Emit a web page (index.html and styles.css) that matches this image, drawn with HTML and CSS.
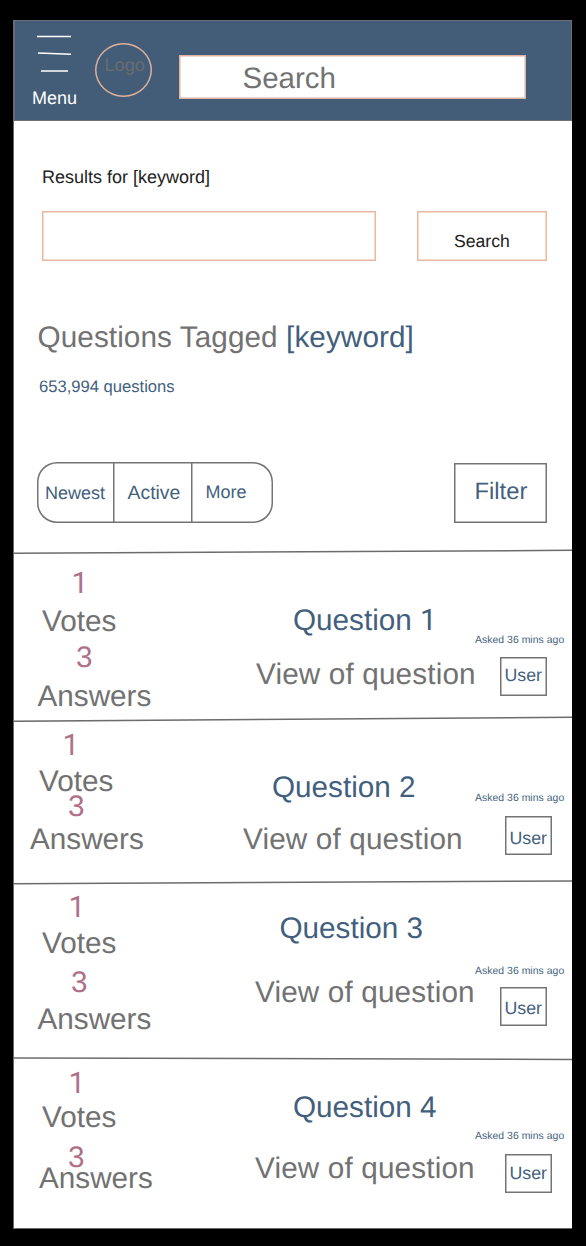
FILE: index.html
```html
<!DOCTYPE html>
<html lang="en">
<head>
<meta charset="utf-8">
<title>Questions Tagged [keyword]</title>
<link rel="stylesheet" href="styles.css">
</head>
<body>
<div class="screen">
  <header class="topbar">
    <div class="menu">
      <svg class="menu-icon" viewBox="0 0 40 40" width="40" height="40"><path d="M1 1.5H35M2 18L35 19.3M5 36H32" fill="none" stroke="#fff" stroke-width="1.5"/></svg>
      <span class="menu-label">Menu</span>
    </div>
    <div class="logo">Logo</div>
    <div class="top-search">Search</div>
  </header>

  <p class="results">Results for [keyword]</p>
  <div class="search-row">
    <div class="field"></div>
    <div class="search-button">Search</div>
  </div>

  <h1 class="title">Questions Tagged <span class="keyword">[keyword]</span></h1>
  <p class="count">653,994 questions</p>

  <div class="toolbar">
    <div class="tabs">
      <span class="tab newest">Newest</span>
      <span class="tab active">Active</span>
      <span class="tab more">More</span>
    </div>
    <div class="filter">Filter</div>
  </div>

  <main class="list">
    <article class="question q1">
      <svg class="divider" viewBox="0 0 558 6"><path d="M0 4.3L558 1.3"/></svg>
      <div class="body">
        <div class="stats">
          <span class="votes num one">1</span><span class="votes-label">Votes</span>
          <span class="answers num">3</span><span class="answers-label">Answers</span>
        </div>
        <div class="content"><h2 class="name">Question <span class="one">1</span></h2><p class="excerpt">View of question</p></div>
        <div class="meta"><span class="asked">Asked 36 mins ago</span><span class="user">User</span></div>
      </div>
    </article>
    <article class="question q2">
      <svg class="divider" viewBox="0 0 558 6"><path d="M0 5.3L558 1.2"/></svg>
      <div class="body">
        <div class="stats">
          <span class="votes num one">1</span><span class="votes-label">Votes</span>
          <span class="answers num">3</span><span class="answers-label">Answers</span>
        </div>
        <div class="content"><h2 class="name">Question 2</h2><p class="excerpt">View of question</p></div>
        <div class="meta"><span class="asked">Asked 36 mins ago</span><span class="user">User</span></div>
      </div>
    </article>
    <article class="question q3">
      <svg class="divider" viewBox="0 0 558 6"><path d="M0 3.8L558 0.9"/></svg>
      <div class="body">
        <div class="stats">
          <span class="votes num one">1</span><span class="votes-label">Votes</span>
          <span class="answers num">3</span><span class="answers-label">Answers</span>
        </div>
        <div class="content"><h2 class="name">Question 3</h2><p class="excerpt">View of question</p></div>
        <div class="meta"><span class="asked">Asked 36 mins ago</span><span class="user">User</span></div>
      </div>
    </article>
    <article class="question q4">
      <svg class="divider" viewBox="0 0 558 6"><path d="M0 1.9L558 3.4"/></svg>
      <div class="body">
        <div class="stats">
          <span class="votes num one">1</span><span class="votes-label">Votes</span>
          <span class="answers num">3</span><span class="answers-label">Answers</span>
        </div>
        <div class="content"><h2 class="name">Question 4</h2><p class="excerpt">View of question</p></div>
        <div class="meta"><span class="asked">Asked 36 mins ago</span><span class="user">User</span></div>
      </div>
    </article>
  </main>
</div>
</body>
</html>
```
FILE: styles.css
```css
* { box-sizing: border-box; }
body {
  margin: 0;
  padding: 20px 14px 18px;
  background: #000;
  font-family: "Liberation Sans", Arial, sans-serif;
  font-size: 18px;
  line-height: 20px;
  color: #727272;
  text-rendering: geometricPrecision;
  white-space: nowrap;
}
p, h1, h2 { margin: 0; font-weight: normal; font-size: inherit; }
.screen {
  display: flex;
  flex-direction: column;
  width: 558px;
  height: 1208px;
  background: #fff;
  box-shadow: -0.5px 0.5px 0 0.5px #6a6a6a;
}

.topbar {
  display: flex;
  align-items: flex-start;
  height: 101px;
  background: #435c77;
  border: 1px solid #6e7073;
}
.menu { display: flex; flex-direction: column; width: 45px; margin: 14px 0 0 17px; color: #fff; }
.menu-icon { margin-left: 4px; }
.menu-label { margin-top: 13px; }
.logo {
  width: 57px;
  height: 54px;
  margin: 22px 0 0 18px;
  padding: 12px 0 0 9.5px;
  border-radius: 50%;
  box-shadow: inset 0 0 0 1.5px #dfb09b;
  font-size: 18.2px;
  color: #6a6c70;
}
.top-search {
  width: 347px;
  height: 44px;
  margin: 34px 0 0 27px;
  padding: 13px 0 0 63.5px;
  background: #fff;
  box-shadow: inset 0 0 0 1.5px #e0b29f;
  font-size: 29.5px;
  line-height: 22px;
}

.results { margin: 46px 0 0 28px; color: #222; }
.search-row { display: flex; gap: 41px; margin: 24px 0 0 28px; }
.field, .search-button { height: 50px; box-shadow: inset 0 0 0 1.5px #e9b89e; }
.field { width: 334px; }
.search-button { width: 130px; padding: 20px 0 0 37px; font-size: 17.6px; color: #222; }

.title { margin: 66px 0 0 23.5px; font-size: 29.7px; line-height: 22px; letter-spacing: 0.09px; }
.keyword, .name { color: #435f7e; }
.count { margin: 28px 0 0 25px; font-size: 16.6px; color: #435f7e; }

.toolbar { display: flex; align-items: flex-start; height: 61px; margin: 65px 0 0 23px; color: #435f7e; }
.tabs { display: flex; width: 236px; height: 61px; border-radius: 20px; box-shadow: inset 0 0 0 1.5px #747474; }
.tab { padding-top: 21px; }
.newest { width: 76px; padding-left: 8px; }
.active { width: 78px; padding-left: 14.5px; font-size: 19.4px; box-shadow: inset 1.5px 0 0 #747474; }
.more {
  width: 82px;
  padding: 20px 0 0 14.5px;
  background: linear-gradient(#747474, #747474) 0 0 / 1.5px 61px no-repeat;
}
.filter {
  width: 93px;
  height: 60px;
  margin: 1px 0 0 181px;
  padding: 18px 0 0 20.5px;
  box-shadow: inset 0 0 0 1.5px #747474;
  font-size: 23.8px;
  line-height: 22px;
}

.list { display: flex; flex-direction: column; margin-top: 26px; }
.question { font-size: 29.7px; line-height: 22px; }
.q1 { height: 167px; }
.q2 { height: 164px; }
.q3 { height: 176px; }
.q4 { height: 172px; }
.divider { display: block; width: 558px; height: 6px; }
.divider path { fill: none; stroke: #6c6c6c; stroke-width: 1.5; }
.body { display: flex; }
.stats, .content, .meta { display: flex; flex-direction: column; align-items: flex-start; padding-top: 1px; }
.stats { width: 216px; }
.content { width: 244px; }
.excerpt { letter-spacing: 0.15px; }
.num { color: #b07088; }
.one { font-family: Roboto, "Liberation Sans", sans-serif; }
.asked { margin-left: 1px; font-size: 10.4px; line-height: 12px; letter-spacing: 0.05px; color: #435f7e; }
.user {
  width: 47px;
  height: 39px;
  padding-left: 4.5px;
  font-size: 17.8px;
  line-height: 36px;
  color: #435f7e;
  box-shadow: inset 0 0 0 1.5px #747474;
}

.q1 .votes { margin: 17px 0 0 57.5px; }
.q1 .votes-label { margin: 16px 0 0 28px; }
.q1 .answers { margin: 14px 0 0 62px; }
.q1 .answers-label { margin: 17px 0 0 23.5px; }
.q1 .name { margin: 54px 0 0 63px; }
.q1 .excerpt { margin: 32px 0 0 26px; }
.q1 .asked { margin-top: 79px; }
.q1 .user { margin: 10px 0 0 26px; }

.q2 .votes { margin: 12px 0 0 48.5px; }
.q2 .votes-label { margin: 14px 0 0 25px; }
.q2 .answers { margin: 3px 0 0 54px; }
.q2 .answers-label { margin: 11px 0 0 16px; }
.q2 .name { margin: 54px 0 0 42px; }
.q2 .excerpt { margin: 30px 0 0 13px; }
.q2 .asked { margin-top: 70px; }
.q2 .user { margin: 11px 0 0 31px; line-height: 45px; }

.q3 .votes { margin: 10px 0 0 54.5px; }
.q3 .votes-label { margin: 14px 0 0 28px; }
.q3 .answers { margin: 17px 0 0 57px; }
.q3 .answers-label { margin: 15px 0 0 23.5px; }
.q3 .name { margin: 31px 0 0 49.5px; }
.q3 .excerpt { margin: 42px 0 0 25px; }
.q3 .asked { margin-top: 79px; }
.q3 .user { margin: 9px 0 0 26px; line-height: 42px; }

.q4 .votes { margin: 10px 0 0 54.5px; }
.q4 .votes-label { margin: 12px 0 0 28px; }
.q4 .answers { margin: 18px 0 0 54px; }
.q4 .answers-label { margin: -1px 0 0 25px; }
.q4 .name { margin: 34px 0 0 63px; }
.q4 .excerpt { margin: 39px 0 0 25px; }
.q4 .asked { margin-top: 68px; }
.q4 .user { margin: 11px 0 0 31px; line-height: 38px; }
```
